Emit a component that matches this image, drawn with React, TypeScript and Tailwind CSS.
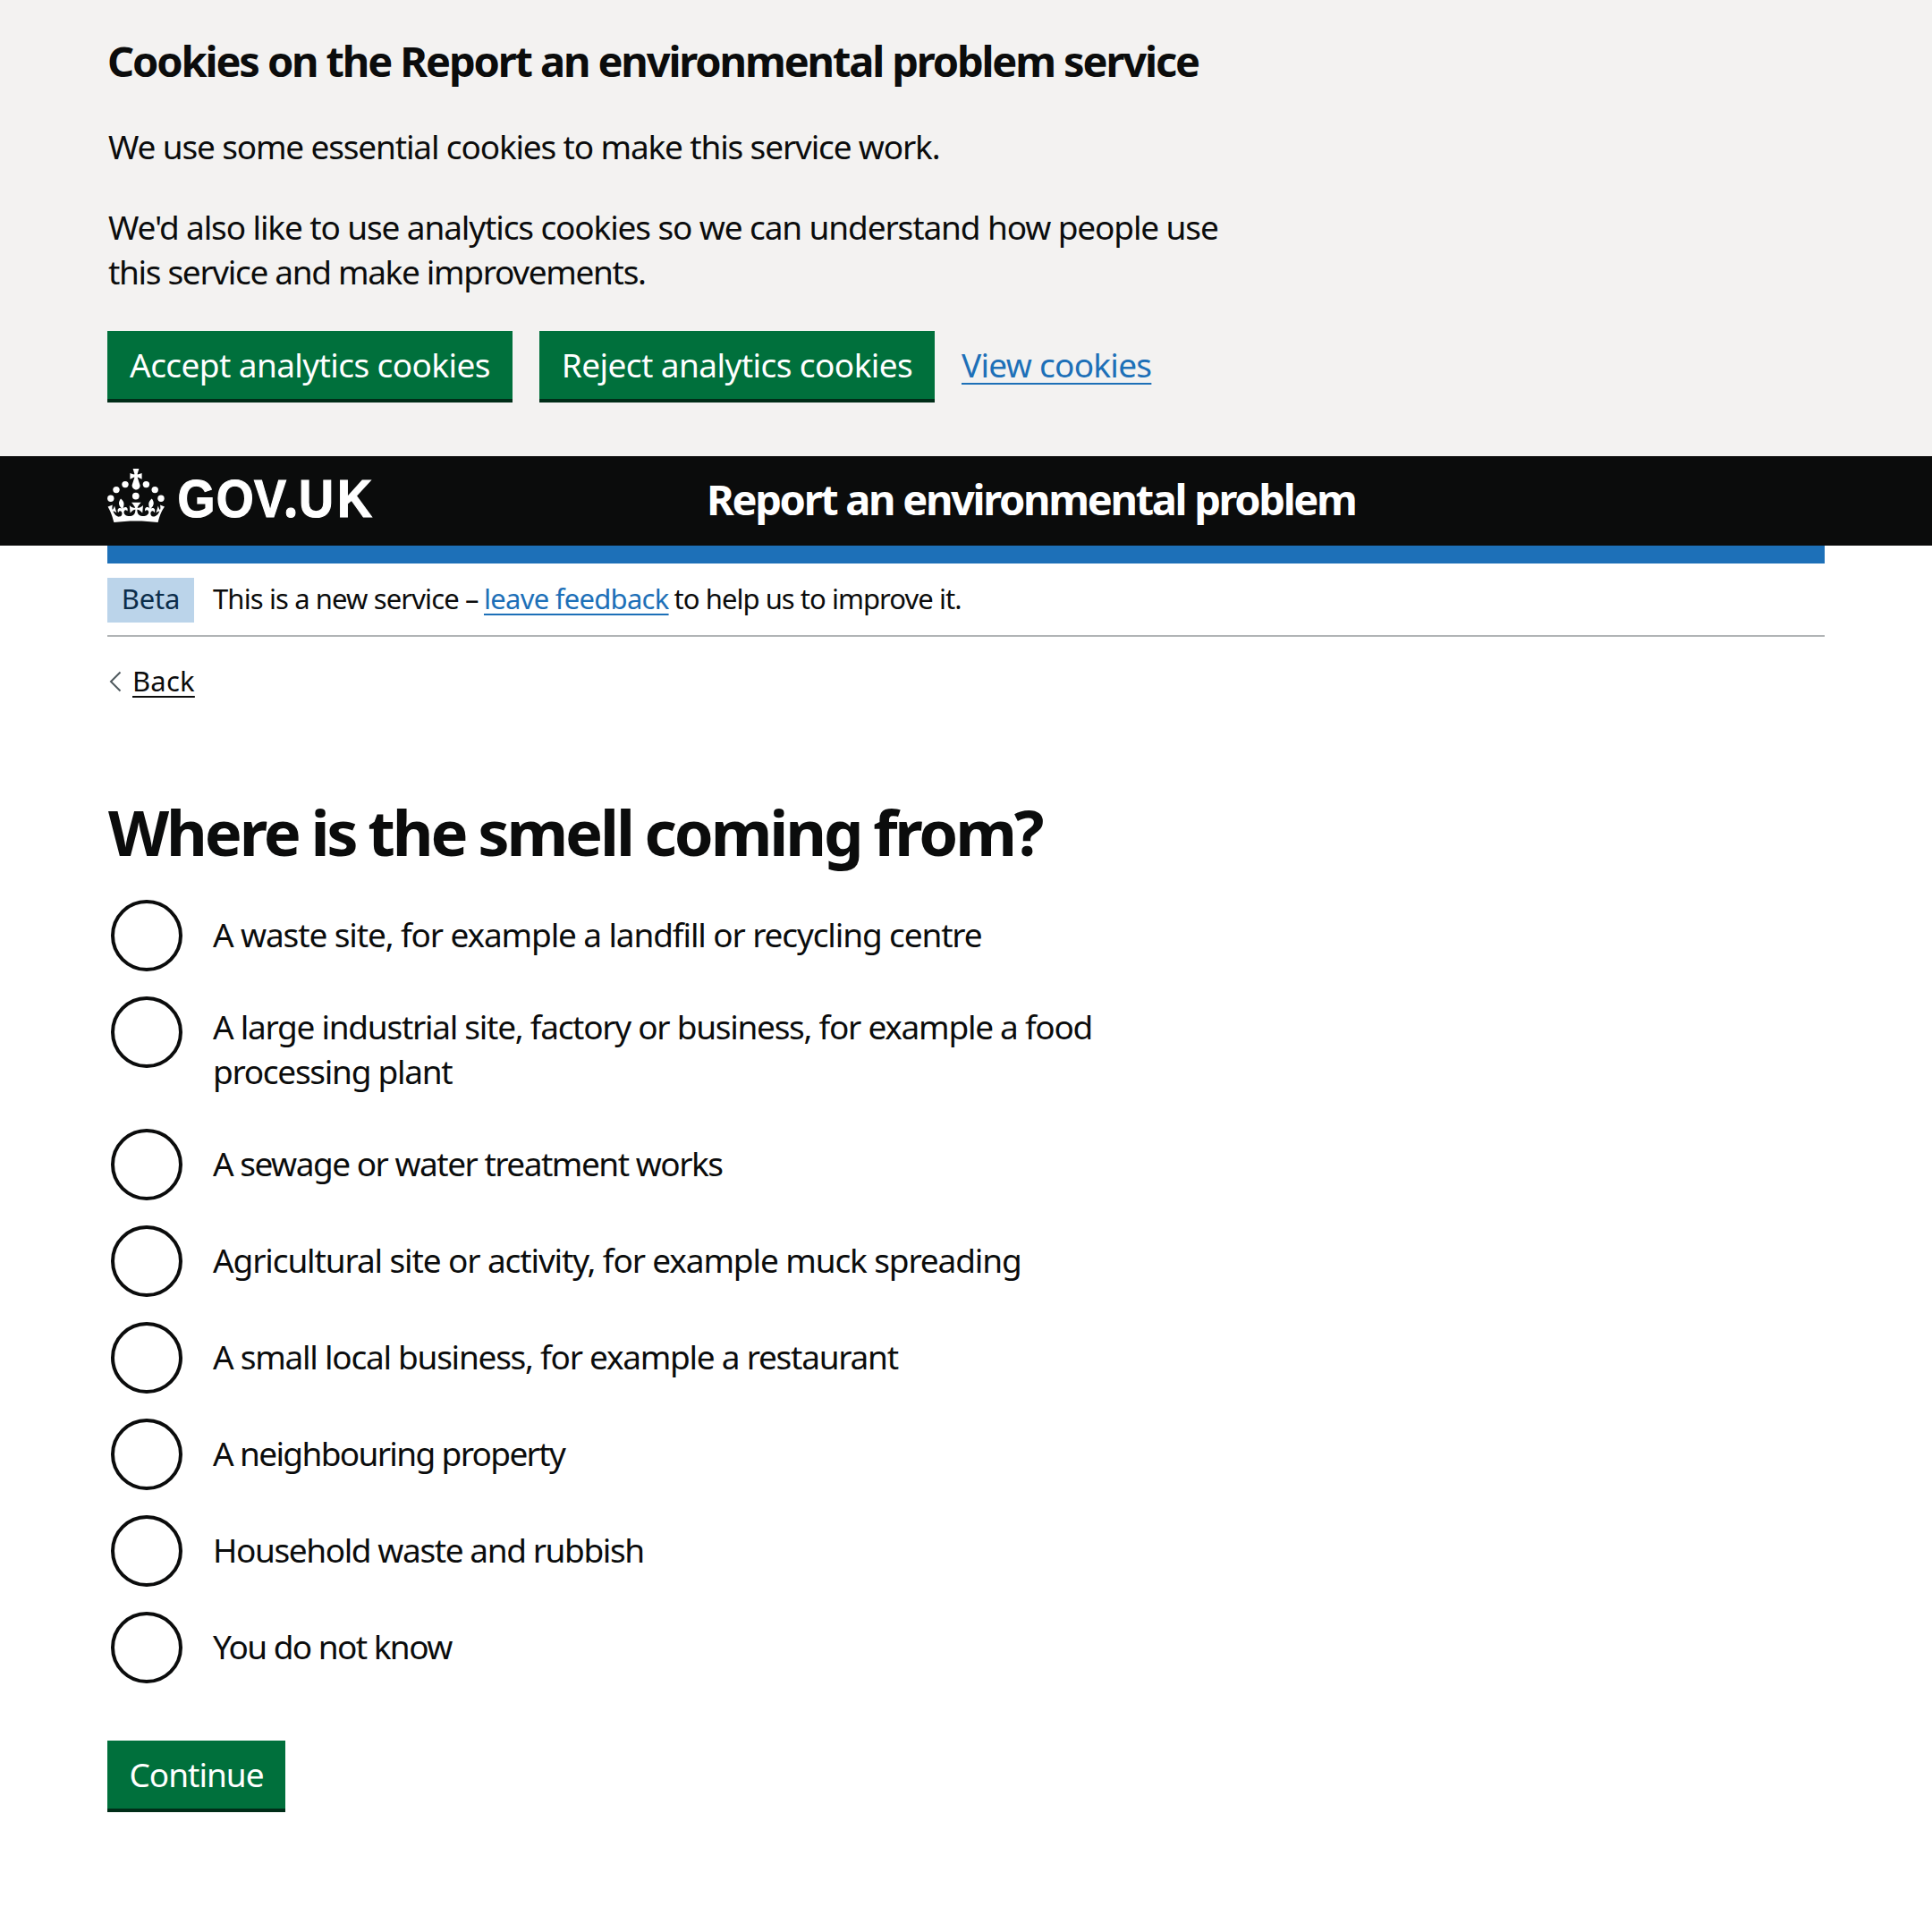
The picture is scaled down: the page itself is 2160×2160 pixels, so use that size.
type Option = { lines: string[]; tracking: string };

const options: Option[] = [
  { lines: ["A waste site, for example a landfill or recycling centre"], tracking: "tracking-[-0.0304em]" },
  {
    lines: ["A large industrial site, factory or business, for example a food", "processing plant"],
    tracking: "tracking-[-0.0345em]",
  },
  { lines: ["A sewage or water treatment works"], tracking: "tracking-[-0.0405em]" },
  { lines: ["Agricultural site or activity, for example muck spreading"], tracking: "tracking-[-0.0303em]" },
  { lines: ["A small local business, for example a restaurant"], tracking: "tracking-[-0.034em]" },
  { lines: ["A neighbouring property"], tracking: "tracking-[-0.0445em]" },
  { lines: ["Household waste and rubbish"], tracking: "tracking-[-0.038em]" },
  { lines: ["You do not know"], tracking: "tracking-[-0.0425em]" },
];

function Crown() {
  return (
    <svg viewBox="0 0 32 30" className="h-[60px] w-16 shrink-0 fill-white" aria-hidden="true">
      <circle cx="1.9" cy="16.6" r="1.85" />
      <circle cx="5" cy="11.8" r="1.85" />
      <circle cx="10" cy="8.8" r="1.85" />
      <circle cx="21.7" cy="8.8" r="1.85" />
      <circle cx="26.6" cy="11.8" r="1.85" />
      <circle cx="30" cy="16.6" r="1.85" />
      <circle cx="15.9" cy="15.3" r="1.95" />
      <path d="M17 4.7l2.3 1.2V2.5l-2.3.7-.2-.2.9-3h-3.4l.9 3-.2.2c-.1.1-2.3-.7-2.3-.7v3.4L15 4.7c.1.1.1.2.2.2l-1.3 4c-.1.2-.1.4-.1.6 0 1.1.8 2 1.9 2.2h.7c1-.2 1.9-1.1 1.9-2.1 0-.2 0-.4-.1-.6l-1.3-4c-.1-.2 0-.2.1-.3" />
      <path d="M16 29.2c4.4 0 8.6.3 12.3.8 1.1-4.5 2.4-7 3.7-8.8l-2.5-.9c.2 1.3.3 1.9 0 2.7-.4-.4-.8-1.1-1.1-2.3l-1.2 4c.7-.5 1.3-.8 2-.9-1.1 2.5-2.6 3.1-3.5 3-1.1-.2-1.7-1.2-1.5-2.1.3-1.2 1.5-1.5 2.1-.1 1.1-2.3-.8-3-2-2.3 1.9-1.9 2.1-3.5.6-5.6-2.1 1.6-2.1 3.2-1.2 5.5-1.2-1.4-3.2-.6-2.5 1.6.9-1.4 2.1-.5 1.9.8-.2 1.1-1.7 2.1-3.5 1.9-2.7-.2-2.9-2.1-2.9-3.6.7-.1 1.9.5 2.9 1.9l.4-4.3c-1.1 1.1-2.1 1.4-3.2 1.4.4-1.2 2.1-3 2.1-3h-5.4s1.7 1.9 2.1 3c-1.1 0-2.1-.2-3.2-1.4l.4 4.3c1-1.4 2.2-2 2.9-1.9-.1 1.5-.2 3.4-2.9 3.6-1.9.2-3.4-.8-3.5-1.9-.2-1.3 1-2.2 1.9-.8.7-2.3-1.2-3-2.5-1.6.9-2.2.9-3.9-1.2-5.5-1.5 2-1.3 3.7.6 5.6-1.2-.7-3.1 0-2 2.3.6-1.4 1.8-1.1 2.1.1.2.9-.3 1.9-1.5 2.1-.9.2-2.4-.5-3.5-3 .6 0 1.2.3 2 .9l-1.2-4c-.3 1.1-.7 1.9-1.1 2.3-.3-.8-.2-1.4 0-2.7l-2.6.9C1.3 23 2.6 25.5 3.7 30c3.7-.5 7.9-.8 12.3-.8" />
    </svg>
  );
}

function Wordmark() {
  return (
    <svg viewBox="0 0 218 60" className="ml-[14px] h-[60px] w-[218px] shrink-0 overflow-visible" aria-label="GOV.UK">
      <g
        transform="scale(0.9 1)"
        className="fill-white stroke-white stroke-[1.2px] font-['Liberation_Sans',sans-serif] text-[60px] font-bold"
      >
        <text x="0.5 48.5 95.5 132.5 151 199" y="54">
          GOV<tspan className="font-['Noto_Sans',sans-serif] text-[62px]">.</tspan>UK
        </text>
      </g>
    </svg>
  );
}

function Button({ className, children }: { className: string; children: string }) {
  return (
    <button
      className={`h-[76px] shrink-0 bg-[#00703c] text-center text-[37px] leading-[50px] whitespace-nowrap text-white shadow-[0_4px_0_#002d18] ${className}`}
    >
      {children}
    </button>
  );
}

export default function App() {
  return (
    <div className="min-h-[2160px] bg-white font-['Noto_Sans',sans-serif] text-[37px] leading-[50px] text-[#0b0c0c]">
      <section className="h-[510px] bg-[#f3f2f1] px-[120px] pt-[38px]">
        <h2 className="text-[47px] leading-[60px] font-bold tracking-[-0.0455em] whitespace-nowrap">
          Cookies on the Report an environmental problem service
        </h2>
        <p className="mt-[41px] pl-px tracking-[-0.0313em] whitespace-nowrap">
          We use some essential cookies to make this service work.
        </p>
        <p className="mt-10 pl-px whitespace-nowrap">
          <span className="block tracking-[-0.0303em]">
            We'd also like to use analytics cookies so we can understand how people use
          </span>
          <span className="block tracking-[-0.036em]">this service and make improvements.</span>
        </p>
        <div className="mt-[41px] flex">
          <Button className="w-[453px] tracking-[-0.016em]">Accept analytics cookies</Button>
          <Button className="ml-[30px] w-[442px] tracking-[-0.0155em]">Reject analytics cookies</Button>
          <a className="ml-[30px] pt-[13px] tracking-[-0.0195em] whitespace-nowrap text-[#1d70b8] underline decoration-2 underline-offset-[6px]">
            View cookies
          </a>
        </div>
      </section>

      <header className="bg-[#0b0c0c] px-[120px]">
        <div className="flex h-[100px]">
          <a className="flex w-[670px] pt-[14px]">
            <Crown />
            <Wordmark />
          </a>
          <span className="pt-[18px] text-[47px] leading-[60px] font-bold tracking-[-0.0497em] whitespace-nowrap text-white">
            Report an environmental problem
          </span>
        </div>
      </header>

      <div className="px-[120px]">
        <div className="h-5 bg-[#1d70b8]" />
        <div className="flex h-[82px] items-start border-b-2 border-[#b1b4b6] pt-4 text-[31px] whitespace-nowrap">
          <strong className="h-[50px] w-[97px] bg-[#bbd4ea] text-center leading-[46px] font-normal tracking-[-0.005em] text-[#0c2d4a]">
            Beta
          </strong>
          <p className="ml-[21px] flex leading-[46px]">
            <span className="w-[303px] tracking-[-0.0285em]">This is a new service –</span>
            <a className="tracking-[-0.0235em] text-[#1d70b8] underline decoration-2 underline-offset-[5px]">
              leave feedback
            </a>
            <span className="ml-[6px] tracking-[-0.031em]">to help us to improve it.</span>
          </p>
        </div>

        <a className="mt-[29px] flex h-10 items-start text-[31px] leading-10">
          <svg viewBox="0 0 14 24" className="mt-[9px] ml-[2px] h-6 w-[14px] fill-none stroke-[#505a5f] stroke-2" aria-hidden="true">
            <path d="M12.5 1.5 2 12l10.500 10.500" />
          </svg>
          <span className="ml-3 tracking-[0.007em] underline decoration-2 underline-offset-[5px]">Back</span>
        </a>

        <main>
          <h1 className="mt-[109px] pl-px text-[70.5px] leading-[80px] font-bold tracking-[-0.0445em] whitespace-nowrap [word-spacing:-0.02em]">
            Where is the smell coming from?
          </h1>
          <div className="mt-9 ml-1 flex flex-col gap-7">
            {options.map(({ lines, tracking }) => (
              <label key={lines[0]} className={`flex items-start ${lines.length > 1 ? "h-[120px]" : "h-20"}`}>
                <span className="size-20 shrink-0 rounded-full border-4 border-[#0b0c0c]" />
                <span className={`ml-[34px] whitespace-nowrap ${tracking} ${lines.length > 1 ? "pt-[9px]" : "pt-[14px]"}`}>
                  {lines.map((line) => (
                    <span key={line} className="block">
                      {line}
                    </span>
                  ))}
                </span>
              </label>
            ))}
          </div>
          <Button className="mt-16 w-[199px] tracking-[-0.027em]">Continue</Button>
        </main>
      </div>
    </div>
  );
}
